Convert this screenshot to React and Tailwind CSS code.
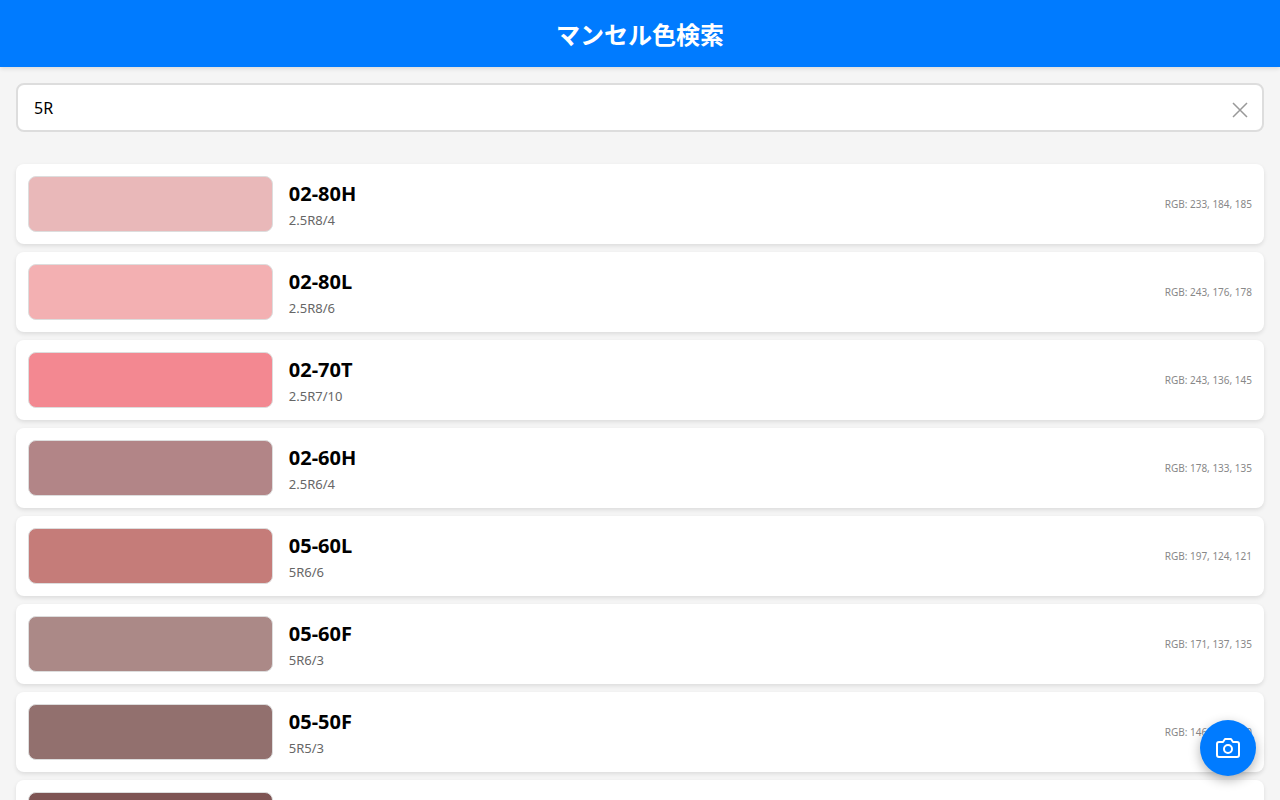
import { useState } from "react";

// Color data used for the search results
const colors = [
  { code: "02-80H", munsell: "2.5R8/4", rgb: [233, 184, 185] },
  { code: "02-80L", munsell: "2.5R8/6", rgb: [243, 176, 178] },
  { code: "02-70T", munsell: "2.5R7/10", rgb: [243, 136, 145] },
  { code: "02-60H", munsell: "2.5R6/4", rgb: [178, 133, 135] },
  { code: "05-60L", munsell: "5R6/6", rgb: [197, 124, 121] },
  { code: "05-60F", munsell: "5R6/3", rgb: [171, 137, 135] },
  { code: "05-50F", munsell: "5R5/3", rgb: [146, 112, 110] },
  { code: "05-40H", munsell: "5R4/4", rgb: [126, 84, 83] },
];

function Header() {
  return (
    <header className="relative bg-[#007bff] px-4 pt-[17px] pb-[15px] text-center text-white shadow-[0_2px_4px_rgba(0,0,0,0.1)]">
      <h1 className="text-2xl leading-[35px] font-bold">マンセル色検索</h1>
    </header>
  );
}

function SearchBox({ value, onChange }) {
  return (
    <div className="relative">
      <input
        type="text"
        aria-label="色を検索"
        value={value}
        onChange={(e) => onChange(e.target.value)}
        className="block h-[49px] w-full rounded-lg border-2 border-[#ddd] bg-white pr-12 pl-4 text-base text-black outline-none"
      />
      <button
        type="button"
        aria-label="クリア"
        onClick={() => onChange("")}
        className="absolute inset-y-0 right-2 flex w-8 cursor-pointer items-center justify-center text-[#999]"
      >
        <svg className="mt-1 size-4" viewBox="0 0 16 16" fill="none" stroke="currentColor" strokeWidth="1.5">
          <path d="M1 1l14 14M15 1L1 15" />
        </svg>
      </button>
    </div>
  );
}

function ColorCard({ color }) {
  return (
    <li className="flex items-center gap-4 rounded-lg bg-white p-3 shadow-[0_2px_4px_rgba(0,0,0,0.1)]">
      <div
        className="h-14 w-1/5 shrink-0 rounded-lg border border-[#ddd]"
        style={{ backgroundColor: `rgb(${color.rgb.join(",")})` }}
      />
      <div className="flex-1 pt-1">
        <h2 className="text-xl leading-7 font-bold text-black">{color.code}</h2>
        <p className="text-[13px] leading-6 text-[#666]">{color.munsell}</p>
      </div>
      <span className="text-[10px] text-[#888]">RGB: {color.rgb.join(", ")}</span>
    </li>
  );
}

function CameraButton() {
  return (
    <button
      type="button"
      aria-label="カメラ"
      className="fixed right-6 bottom-6 flex size-14 cursor-pointer items-center justify-center rounded-full bg-[#007bff] text-white shadow-[0_4px_12px_rgba(0,0,0,0.3)]"
    >
      <svg
        className="size-6"
        viewBox="0 0 24 24"
        fill="none"
        stroke="currentColor"
        strokeWidth="2"
        strokeLinecap="round"
        strokeLinejoin="round"
      >
        <path d="M23 19a2 2 0 0 1-2 2H3a2 2 0 0 1-2-2V8a2 2 0 0 1 2-2h4l2-3h6l2 3h4a2 2 0 0 1 2 2z" />
        <circle cx="12" cy="13" r="4" />
      </svg>
    </button>
  );
}

function App() {
  const [query, setQuery] = useState("5R");

  // Match against both the color code and the Munsell value
  const results = colors.filter((color) =>
    `${color.code} ${color.munsell}`.toLowerCase().includes(query.toLowerCase())
  );

  return (
    <div className="min-h-screen bg-[#f5f5f5] font-['Noto_Sans','Noto_Sans_CJK_JP',sans-serif]">
      <Header />
      <main className="flex flex-col gap-8 p-4">
        <SearchBox value={query} onChange={setQuery} />
        <ul className="flex flex-col gap-2">
          {results.map((color) => (
            <ColorCard key={color.code} color={color} />
          ))}
        </ul>
      </main>
      <CameraButton />
    </div>
  );
}

export default App;
